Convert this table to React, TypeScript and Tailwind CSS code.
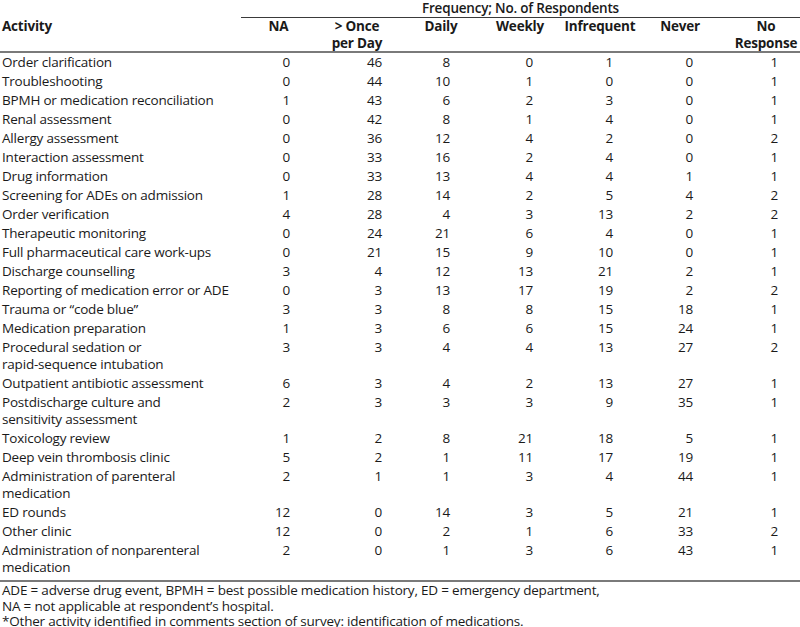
import React from "react";

type Row = { activity: React.ReactNode; values: number[] };

const rows: Row[] = [
  { activity: "Order clarification", values: [0, 46, 8, 0, 1, 0, 1] },
  { activity: "Troubleshooting", values: [0, 44, 10, 1, 0, 0, 1] },
  { activity: "BPMH or medication reconciliation", values: [1, 43, 6, 2, 3, 0, 1] },
  { activity: "Renal assessment", values: [0, 42, 8, 1, 4, 0, 1] },
  { activity: "Allergy assessment", values: [0, 36, 12, 4, 2, 0, 2] },
  { activity: "Interaction assessment", values: [0, 33, 16, 2, 4, 0, 1] },
  { activity: "Drug information", values: [0, 33, 13, 4, 4, 1, 1] },
  { activity: "Screening for ADEs on admission", values: [1, 28, 14, 2, 5, 4, 2] },
  { activity: "Order verification", values: [4, 28, 4, 3, 13, 2, 2] },
  { activity: "Therapeutic monitoring", values: [0, 24, 21, 6, 4, 0, 1] },
  { activity: "Full pharmaceutical care work-ups", values: [0, 21, 15, 9, 10, 0, 1] },
  { activity: "Discharge counselling", values: [3, 4, 12, 13, 21, 2, 1] },
  { activity: "Reporting of medication error or ADE", values: [0, 3, 13, 17, 19, 2, 2] },
  { activity: "Trauma or \u201ccode blue\u201d", values: [3, 3, 8, 8, 15, 18, 1] },
  { activity: "Medication preparation", values: [1, 3, 6, 6, 15, 24, 1] },
  {
    activity: (
      <>
        Procedural sedation or
        <br />
        rapid-sequence intubation
      </>
    ),
    values: [3, 3, 4, 4, 13, 27, 2],
  },
  { activity: "Outpatient antibiotic assessment", values: [6, 3, 4, 2, 13, 27, 1] },
  {
    activity: (
      <>
        Postdischarge culture and
        <br />
        sensitivity assessment
      </>
    ),
    values: [2, 3, 3, 3, 9, 35, 1],
  },
  { activity: "Toxicology review", values: [1, 2, 8, 21, 18, 5, 1] },
  { activity: "Deep vein thrombosis clinic", values: [5, 2, 1, 11, 17, 19, 1] },
  {
    activity: (
      <>
        Administration of parenteral
        <br />
        medication
      </>
    ),
    values: [2, 1, 1, 3, 4, 44, 1],
  },
  { activity: "ED rounds", values: [12, 0, 14, 3, 5, 21, 1] },
  { activity: "Other clinic", values: [12, 0, 2, 1, 6, 33, 2] },
  {
    activity: (
      <>
        Administration of nonparenteral
        <br />
        medication
      </>
    ),
    values: [2, 0, 1, 3, 6, 43, 1],
  },
];

// right padding per value column so numbers sit under their headers
const numPad = ["pr-[26px]", "pr-[16px]", "pr-[34px]", "pr-[23px]", "pr-[31px]", "pr-[23px]", "pr-[22px]"];

export default function App() {
  return (
    <div className="w-[800px] h-[627px] overflow-hidden bg-white text-[#1a1a1a] font-['Open_Sans',sans-serif] text-[13.5px] tracking-[-0.2px]">
      <table className="w-[800px] table-fixed border-collapse">
        <colgroup>
          <col className="w-[241px]" />
          <col className="w-[75px]" />
          <col className="w-[82px]" />
          <col className="w-[86px]" />
          <col className="w-[72px]" />
          <col className="w-[88px]" />
          <col className="w-[72px]" />
          <col className="w-[84px]" />
        </colgroup>
        <thead>
          <tr>
            <th className="p-0"></th>
            <th colSpan={7} className="p-0 pt-[1px] pb-[1px] text-center font-semibold leading-[15px] border-b border-[#3a3a3a]">
              Frequency; No. of Respondents
            </th>
          </tr>
          <tr className="border-b-2 border-[#7a7a7a] align-top font-semibold leading-[16.5px]">
            <th className="pl-[2px] text-left">Activity</th>
            <th className="text-center">NA</th>
            <th className="text-center">
              &gt; Once
              <br />
              per Day
            </th>
            <th className="text-center">Daily</th>
            <th className="text-center">Weekly</th>
            <th className="text-center">Infrequent</th>
            <th className="text-center">Never</th>
            <th className="pl-[16px] text-center">
              No
              <br />
              Response
            </th>
          </tr>
        </thead>
        <tbody className="border-b-2 border-[#7a7a7a]">
          {rows.map((row, i) => {
            const last = i === rows.length - 1;
            const py = last ? "pt-[1px] pb-[4px]" : "py-[1px]";
            return (
              <tr key={i} className="align-top leading-[17px]">
                <td className={`pl-[2px] ${py}`}>{row.activity}</td>
                {row.values.map((v, j) => (
                  <td key={j} className={`${py} text-right ${numPad[j]}`}>
                    {v}
                  </td>
                ))}
              </tr>
            );
          })}
        </tbody>
      </table>
      <div className="pl-[2px] pt-[1px] leading-[15.5px]">
        <p>ADE = adverse drug event, BPMH = best possible medication history, ED = emergency department,</p>
        <p>NA = not applicable at respondent&rsquo;s hospital.</p>
        <p>*Other activity identified in comments section of survey: identification of medications.</p>
      </div>
    </div>
  );
}
